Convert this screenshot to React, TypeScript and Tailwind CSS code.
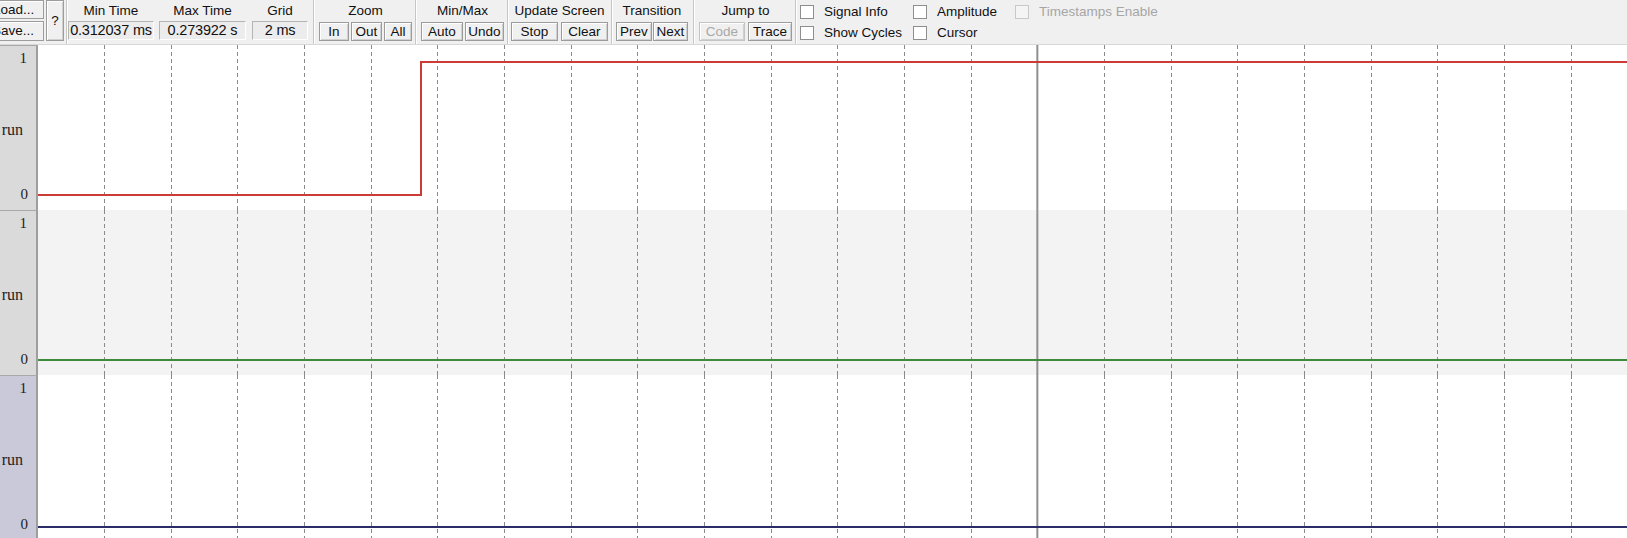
const ui = { fontFamily: '"Liberation Sans", Arial, sans-serif' };
const serif = { fontFamily: '"Liberation Serif", "Times New Roman", serif' };

function Btn({ w, label, disabled = false, h = "h-[19px]" }: { w: string; label: string; disabled?: boolean; h?: string }) {
  return (
    <div
      className={`${w} ${h} flex items-center justify-center border bg-[#f0f0f0] text-[13.5px] leading-none shadow-[inset_1px_1px_0_#ffffff,inset_-1px_-1px_0_#d0d0d0] ${
        disabled ? "border-[#c4c4c4] text-[#a8a8a8]" : "border-[#9c9c9c] text-[#111]"
      }`}
    >
      {label}
    </div>
  );
}

function Sep({ ml }: { ml: string }) {
  return <div className={`${ml} w-[2px] h-[44px] border-l border-[#c6c6c6] border-r border-r-white`} />;
}

function Group({ title, children, ml }: { title: string; children: React.ReactNode; ml: string }) {
  return (
    <div className={`${ml} flex flex-col`}>
      <div className="h-[20px] leading-[22px] text-center text-[13.5px] text-[#111] whitespace-nowrap">{title}</div>
      <div className="mt-[2px] flex">{children}</div>
    </div>
  );
}

function Field({ w, title, value, ml }: { w: string; title: string; value: string; ml: string }) {
  return (
    <div className={`${ml} ${w} flex flex-col`}>
      <div className="h-[20px] leading-[22px] text-center text-[13.5px] text-[#111]">{title}</div>
      <div className="mt-[1px] h-[19px] border border-[#b4b4b4] border-b-white border-r-white bg-[#ececec] text-[14.5px] leading-[17px] text-center text-[#111] whitespace-nowrap tracking-[-0.2px]">
        {value}
      </div>
    </div>
  );
}

function Check({ label, disabled = false }: { label: string; disabled?: boolean }) {
  return (
    <div className="flex items-center h-[20px]">
      <div className={`w-[14px] h-[14px] border ${disabled ? "border-[#c8c8c8] bg-[#f4f4f4]" : "border-[#8e8e8e] bg-white"}`} />
      <span className={`ml-[10px] text-[13.5px] whitespace-nowrap ${disabled ? "text-[#a6a6a6]" : "text-[#111]"}`}>{label}</span>
    </div>
  );
}

function Toolbar() {
  return (
    <div className="h-[45px] flex items-start bg-[#f0f0f0] border-b border-[#d8d8d8] overflow-hidden" style={ui}>
      <div className="-ml-[12px] w-[56px] flex flex-col gap-[2px]">
        <div className="h-[19px] pl-[4px] border border-[#9c9c9c] bg-[#f0f0f0] text-[13.5px] leading-[17px] text-[#111] shadow-[inset_1px_1px_0_#ffffff]">Load...</div>
        <div className="h-[20px] pl-[3px] border border-[#9c9c9c] bg-[#f0f0f0] text-[13.5px] leading-[18px] text-[#111] shadow-[inset_1px_1px_0_#ffffff]">Save...</div>
      </div>
      <div className="ml-[2px]">
        <Btn w="w-[18px]" h="h-[41px]" label="?" />
      </div>
      <Sep ml="ml-[2px]" />
      <Field ml="ml-[0px]" w="w-[86px]" title="Min Time" value="0.312037 ms" />
      <Field ml="ml-[5px]" w="w-[87px]" title="Max Time" value="0.273922 s" />
      <Field ml="ml-[6px]" w="w-[56px]" title="Grid" value="2 ms" />
      <Sep ml="ml-[5px]" />
      <Group ml="ml-[4px]" title="Zoom">
        <Btn w="w-[30px]" label="In" />
        <div className="ml-[2px]"><Btn w="w-[31px]" label="Out" /></div>
        <div className="ml-[2px]"><Btn w="w-[28px]" label="All" /></div>
      </Group>
      <Sep ml="ml-[3px]" />
      <Group ml="ml-[4px]" title="Min/Max">
        <Btn w="w-[42px]" label="Auto" />
        <div className="ml-[2px]"><Btn w="w-[39px]" label="Undo" /></div>
      </Group>
      <Sep ml="ml-[3px]" />
      <Group ml="ml-[2px]" title="Update Screen">
        <Btn w="w-[47px]" label="Stop" />
        <div className="ml-[3px]"><Btn w="w-[47px]" label="Clear" /></div>
      </Group>
      <Sep ml="ml-[3px]" />
      <Group ml="ml-[3px]" title="Transition">
        <Btn w="w-[36px]" label="Prev" />
        <div className="ml-[1px]"><Btn w="w-[35px]" label="Next" /></div>
      </Group>
      <Sep ml="ml-[5px]" />
      <Group ml="ml-[4px]" title="Jump to">
        <Btn w="w-[46px]" label="Code" disabled />
        <div className="ml-[3px]"><Btn w="w-[44px]" label="Trace" /></div>
      </Group>
      <Sep ml="ml-[3px]" />
      <div className="ml-[3px] grid grid-cols-[113px_102px_160px] gap-y-[1px] pt-[2px]">
        <Check label="Signal Info" />
        <Check label="Amplitude" />
        <Check label="Timestamps Enable" disabled />
        <Check label="Show Cycles" />
        <Check label="Cursor" />
      </div>
    </div>
  );
}

const grid = Array.from({ length: 24 }, (_, i) => 66 + i * 66.667);

function Panel({ bg, labelBg, color, points }: { bg: string; labelBg: string; color: string; points: string }) {
  return (
    <div className="h-[165px] flex">
      <div className={`w-[38px] shrink-0 relative overflow-hidden border-r-2 border-[#9e9e9e] border-t border-t-[#a8a8a8] ${labelBg}`} style={serif}>
        <div className="absolute right-[9px] top-[5px] text-[15px] leading-none text-[#222]">1</div>
        <div className="absolute right-[13px] top-[76px] text-[16px] leading-none text-[#222] whitespace-nowrap">run</div>
        <div className="absolute right-[8px] top-[141px] text-[15px] leading-none text-[#222]">0</div>
      </div>
      <div className={`flex-1 relative ${bg}`}>
        <svg className="absolute inset-0" width="100%" height="165">
          {grid.map((x, i) =>
            i === 14 ? (
              <line key={i} x1={x} y1={0} x2={x} y2={165} stroke="#8f8f8f" strokeWidth={2} />
            ) : (
              <line key={i} x1={Math.round(x) + 0.5} y1={0} x2={Math.round(x) + 0.5} y2={165} stroke="#8a8a8a" strokeWidth={1} strokeDasharray="4 3" shapeRendering="crispEdges" />
            )
          )}
          <polyline points={points} fill="none" stroke={color} strokeWidth={2} shapeRendering="crispEdges" />
        </svg>
      </div>
    </div>
  );
}

export default function App() {
  return (
    <div className="w-[1627px] h-[538px] overflow-hidden bg-white">
      <Toolbar />
      <Panel bg="bg-white" labelBg="bg-[#dadada]" color="#cc3b36" points="0,150 383,150 383,17 1600,17" />
      <Panel bg="bg-[#f3f3f3]" labelBg="bg-[#dadada]" color="#3d8a3d" points="0,150 1600,150" />
      <Panel bg="bg-white" labelBg="bg-[#c9c9d9]" color="#2c2c68" points="0,152 1600,152" />
    </div>
  );
}
